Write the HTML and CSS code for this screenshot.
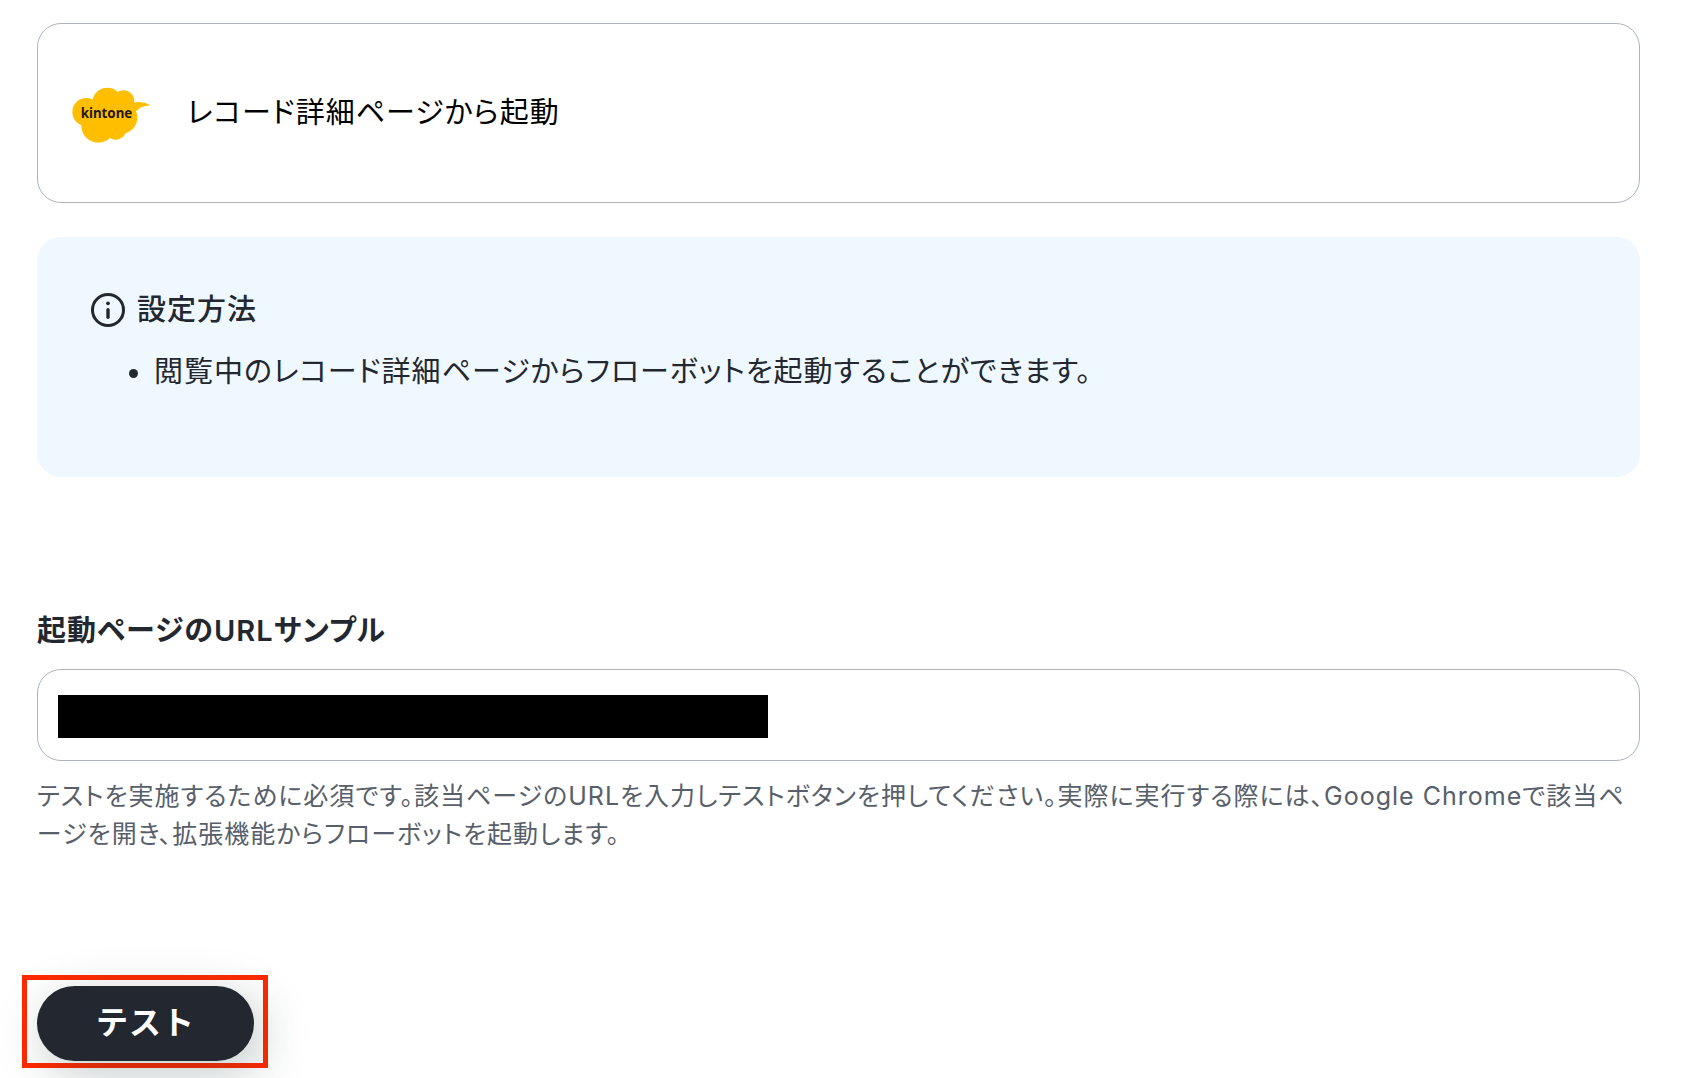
FILE: index.html
```html
<!DOCTYPE html>
<html lang="ja">
<head>
    <meta charset="UTF-8">
    <meta name="viewport" content="width=device-width, initial-scale=1.0">
    <title>レコード詳細ページから起動</title>
    <link rel="stylesheet" href="styles.css">
</head>
<body>
    <main class="page">
        <!-- Trigger -->
        <section class="trigger-card">
            <svg class="trigger-logo" viewBox="156 232 237 168" aria-hidden="true">
                <g fill="#ffbf00">
                    <circle cx="199" cy="307" r="42"/>
                    <circle cx="262" cy="279" r="45"/>
                    <circle cx="311" cy="274" r="32"/>
                    <circle cx="235" cy="348" r="51"/>
                    <circle cx="287" cy="358" r="32"/>
                    <circle cx="304" cy="324" r="48"/>
                    <path d="M338 279 Q366 273 392 287 Q366 288 350 303 L320 320 Z"/>
                </g>
                <text class="logo-text" x="182" y="324">kintone</text>
            </svg>
            <span class="trigger-name">レコード詳細ページから起動</span>
        </section>

        <!-- How to set up -->
        <section class="info-box">
            <h2 class="info-title">
                <svg class="info-icon" viewBox="0 0 36 36" aria-hidden="true">
                    <circle cx="18" cy="18" r="15.5" fill="none" stroke="#23272f" stroke-width="3"/>
                    <circle cx="18" cy="11.3" r="1.9" fill="#23272f"/>
                    <path d="M18 17.8V25.2" stroke="#23272f" stroke-width="3.4" stroke-linecap="round"/>
                </svg>
                設定方法
            </h2>
            <ul class="info-list">
                <li>閲覧中のレコード詳細ページからフローボットを起動することができます。</li>
            </ul>
        </section>

        <!-- Sample URL -->
        <form class="url-form">
            <label class="field-label" for="sample-url">起動ページのURLサンプル</label>
            <div class="field">
                <input class="field-input" type="text" id="sample-url" aria-describedby="url-help">
                <span class="field-mask"></span>
            </div>
            <p class="field-help" id="url-help">テストを実施するために必須です。該当ページのURLを入力しテストボタンを押してください。実際に実行する際には、Google Chromeで該当ページを開き、拡張機能からフローボットを起動します。</p>

            <div class="highlight">
                <button class="test-button" type="button">テスト</button>
            </div>
        </form>
    </main>
</body>
</html>
```
FILE: styles.css
```css
* {
    box-sizing: border-box;
}
body {
    margin: 0;
    background-color: #fff;
    color: #23272f;
    font-family: Inter, "Noto Sans CJK JP", sans-serif;
    font-size: 29px;
    line-height: 44px;
    letter-spacing: 1px;
    font-feature-settings: "palt";
}
.page {
    min-height: 100vh;
    padding: 23px 54px 0 37px;
}
.trigger-card {
    display: flex;
    align-items: center;
    gap: 36px;
    padding: 67px 34px;
    border: 1px solid #abb4c0;
    border-radius: 24px;
    color: #000;
}
.trigger-logo {
    width: 79px;
    height: 56px;
    margin: -4px 0 -8px;
}
.logo-text {
    font-family: "Noto Sans", sans-serif;
    font-size: 40px;
    font-weight: bold;
    letter-spacing: 0;
    fill: #231815;
}
.info-box {
    margin-top: 34px;
    padding: 51px 53px 83px;
    border-radius: 24px;
    background-color: #eff7ff;
}
.info-title {
    display: flex;
    align-items: center;
    gap: 11px;
    margin: 0 0 18px;
    font-size: 29px;
    font-weight: 500;
}
.info-icon {
    width: 36px;
    height: 36px;
}
.info-list {
    margin: 0;
    padding-left: 64px;
}
.field-label {
    display: block;
    margin-top: 132px;
    font-weight: 600;
}
.field {
    position: relative;
    margin-top: 16px;
}
.field-input {
    display: block;
    width: 100%;
    height: 92px;
    padding: 0 20px;
    border: 1px solid #abb4c0;
    border-radius: 24px;
    background-color: #fff;
    font: inherit;
    color: inherit;
}
/* Hides the stored URL */
.field-mask {
    position: absolute;
    top: 26px;
    left: 21px;
    width: 710px;
    height: 43px;
    background-color: #000;
}
.field-help {
    margin: 16px 0 0;
    font-size: 25px;
    line-height: 38px;
    color: #57606a;
}
.highlight {
    display: inline-block;
    margin: 122px 0 0 -15px;
    padding: 6px 9px 2px 10px;
    border: 5px solid #ff2a00;
}
.test-button {
    display: block;
    padding: 15px 59px 16px;
    border: none;
    border-radius: 38px;
    background-color: #23272f;
    color: #fff;
    font: inherit;
    font-size: 32px;
    font-weight: 600;
    font-feature-settings: normal;
    letter-spacing: inherit;
    box-shadow: 8px 12px 48px rgba(35, 55, 55, 0.27);
}
```
